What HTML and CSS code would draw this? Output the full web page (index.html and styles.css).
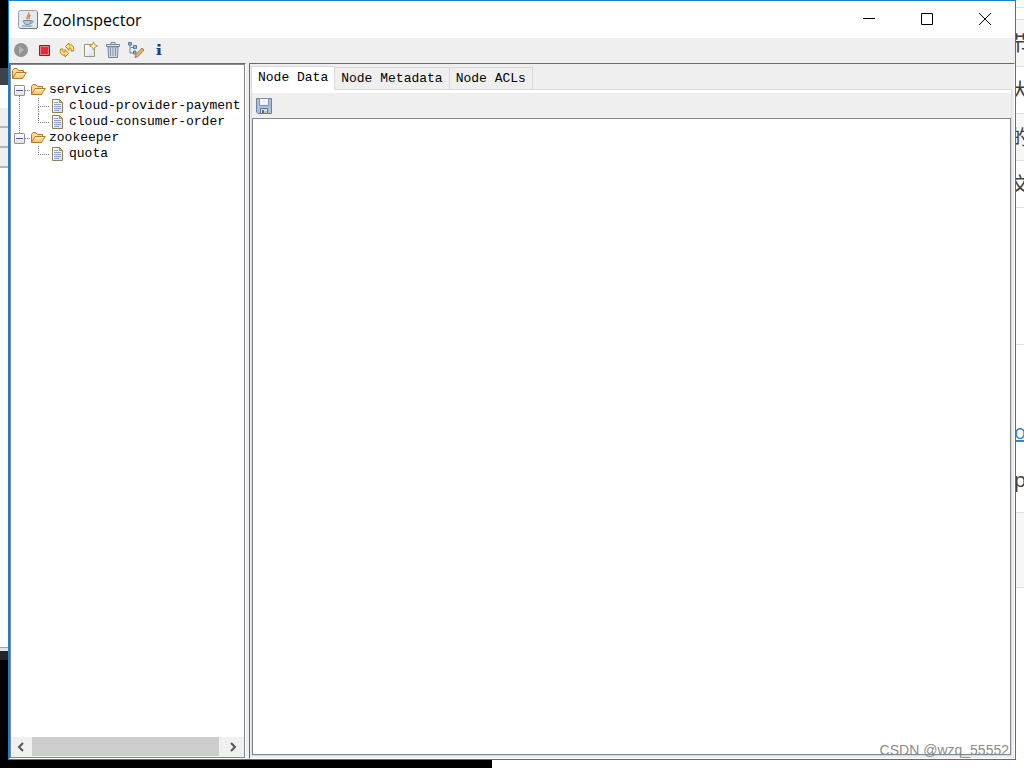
FILE: index.html
```html
<!DOCTYPE html>
<html lang="en">
<head>
<meta charset="utf-8">
<title>ZooInspector</title>
<link rel="stylesheet" href="styles.css">
</head>
<body>
<svg class="symbols" aria-hidden="true">
  <defs>
    <linearGradient id="gold" x1="0" y1="0" x2="0" y2="1"><stop offset="0" stop-color="#fff3c4"/><stop offset="1" stop-color="#f2bd5c"/></linearGradient>
    <linearGradient id="sheet" x1="0" y1="0" x2="1" y2="1"><stop offset="0" stop-color="#ffffff"/><stop offset="1" stop-color="#cfe0f5"/></linearGradient>
    <symbol id="folder" viewBox="0 0 16 16">
      <path d="M1.500 12.500V4.500L3 2.500H6L7.500 4.500H12.500V7" fill="#f7d88c" stroke="#b07a2c"/>
      <path d="M1.500 12.500L5 6.500H15.300L11.500 12.500Z" fill="url(#gold)" stroke="#b87a24"/>
    </symbol>
    <symbol id="file" viewBox="0 0 16 16">
      <path d="M2.500 1.500H9.500L12.500 4.500V14.500H2.500Z" fill="url(#sheet)" stroke="#8f8150"/>
      <path d="M9.500 1.500V4.500H12.500Z" fill="#e6c06c" stroke="#b28a3c"/>
      <path d="M4 4.500H8M4 6.500H11M4 8.500H11M4 10.500H11M4 12.500H9" stroke="#8ba1cc"/>
    </symbol>
  </defs>
</svg>
<div class="desktop">
  <div class="behind-left">
    <div class="dark"></div><div class="slate"></div><div class="pale"></div><div class="band"></div><div class="band"></div><div class="band"></div><div class="blank"></div><div class="edge"></div><div class="dark rest"></div>
  </div>

  <main class="window">
    <header class="titlebar">
      <svg class="app-icon" viewBox="0 0 20 20" aria-hidden="true">
        <rect x=".5" y=".5" width="19" height="18" rx="2" fill="#e4e9ee" stroke="#98a2ab"/>
        <path d="M2 18.500H19M19.500 2V18" stroke="#6f7982"/>
        <path d="M10.500 2.500C12 5 7.500 6 9.500 9.500M12.500 5C10 6.500 11 7.500 11.500 9" fill="none" stroke="#e2864a" stroke-width="1.500"/>
        <path d="M5.500 10.500H13V12C13 14 11.500 14.500 9 14.500S6 13.500 5.500 10.500Z" fill="#b7cadb" stroke="#6d8ba8"/>
        <path d="M13 11C16 10 16 13 12.500 13.500M4 16H14.500" fill="none" stroke="#6d8ba8"/>
      </svg>
      <h1>ZooInspector</h1>
      <div class="controls">
        <button aria-label="Minimize"><svg viewBox="0 0 14 14"><path d="M1 6.500H13"/></svg></button>
        <button aria-label="Maximize"><svg viewBox="0 0 14 14"><path d="M1.500 1.500H12.500V12.500H1.500Z"/></svg></button>
        <button aria-label="Close"><svg viewBox="0 0 14 14"><path d="M1 1L13 13M13 1L1 13"/></svg></button>
      </div>
    </header>

    <div class="toolbar">
      <button aria-label="Connect" disabled><svg viewBox="0 0 16 16"><circle cx="8" cy="8" r="7" fill="#929292"/><path d="M6 3.500L11 8L6 12.500Z" fill="#b4b4b4"/></svg></button>
      <button aria-label="Disconnect"><svg viewBox="0 0 16 16"><path d="M3.500 3.500H13.500V13.500H3.500Z" fill="#e32b3a" stroke="#a5121f"/><path d="M4.500 4.500H12.500V12.500H4.500Z" fill="none" stroke="#ee7d83"/></svg></button>
      <button aria-label="Refresh"><svg viewBox="0 0 16 16"><path d="M6.500 4.500L10 1V3C13.500 2 15.500 5 14.500 9H12C12.500 6.500 12 5.500 10 6V8.500Z" fill="#ffe07a" stroke="#b07c1c" stroke-width=".9"/><path d="M9.500 11.500L6 15V13C2.500 14 .5 11 1.500 7H4C3.500 9.500 4 10.500 6 10V7.500Z" fill="#ffe07a" stroke="#b07c1c" stroke-width=".9"/></svg></button>
      <button aria-label="Add node"><svg viewBox="0 0 16 16"><path d="M2.500 2.500H12.500V14.500H2.500Z" fill="url(#sheet)" stroke="#9b9475"/><path d="M11.500 0L12.800 2.700L15.500 4L12.800 5.300L11.500 8L10.200 5.300L7.500 4L10.200 2.700Z" fill="#fff2a8" stroke="#a98a38" stroke-width=".8"/></svg></button>
      <button aria-label="Delete node"><svg viewBox="0 0 16 16"><path d="M3 5H13L12.500 15.500H3.500Z" fill="#cbd6e2" stroke="#75879b"/><path d="M1.500 2.500H14.500V4.500H1.500ZM6 2.500V.5H10V2.500" fill="#dce5ee" stroke="#75879b"/><path d="M5.500 6V14M8 6V14M10.500 6V14" stroke="#8598ad"/></svg></button>
      <button aria-label="Edit node viewers"><svg viewBox="0 0 16 16"><path d="M2 2V11H7M3 5.500H7" fill="none" stroke="#657f9e"/><path d="M.5 .5H3.500V3H.5ZM5.500 3.500H8.500V6.500H5.500ZM5.500 9H8V12H5.500Z" fill="#9cb6d8" stroke="#3c61a0" stroke-width=".8"/><path d="M8 12.500L14 6L16 8L10 14.500L7 15.500Z" fill="#e8b662" stroke="#8c6840" stroke-width=".8"/></svg></button>
      <button aria-label="About"><svg viewBox="0 0 16 16"><path d="M6.500 2H9.500V4.500H6.500ZM5.500 6H9.500V12H10.500V13H5.500V12H6.500V7H5.500Z" fill="#084a90"/></svg></button>
    </div>

    <div class="split">
      <section class="tree-pane">
        <div class="tree-box">
          <ul class="tree">
            <li><span class="row"><svg class="icon"><use href="#folder"/></svg></span>
              <ul>
                <li class="branch more"><span class="row"><button class="toggle" aria-label="Collapse services"></button><i class="link"></i><svg class="icon"><use href="#folder"/></svg><span>services</span></span>
                  <ul>
                    <li class="leaf more"><span class="row"><svg class="icon"><use href="#file"/></svg><span>cloud-provider-payment</span></span></li>
                    <li class="leaf"><span class="row"><svg class="icon"><use href="#file"/></svg><span>cloud-consumer-order</span></span></li>
                  </ul>
                </li>
                <li class="branch"><span class="row"><button class="toggle" aria-label="Collapse zookeeper"></button><i class="link"></i><svg class="icon"><use href="#folder"/></svg><span>zookeeper</span></span>
                  <ul>
                    <li class="leaf"><span class="row"><svg class="icon"><use href="#file"/></svg><span>quota</span></span></li>
                  </ul>
                </li>
              </ul>
            </li>
          </ul>
          <div class="scrollbar">
            <button aria-label="Scroll left"><svg viewBox="0 0 12 12"><path d="M7 2L3 6L7 10"/></svg></button>
            <div class="thumb"></div>
            <button class="right" aria-label="Scroll right"><svg viewBox="0 0 12 12"><path d="M5 2L9 6L5 10"/></svg></button>
          </div>
        </div>
      </section>

      <section class="detail-pane">
        <div class="tabs" role="tablist">
          <button role="tab" aria-selected="true" class="tab selected">Node Data</button>
          <button role="tab" aria-selected="false" class="tab">Node Metadata</button>
          <button role="tab" aria-selected="false" class="tab">Node ACLs</button>
          <span class="tab-line"></span>
        </div>
        <div class="tab-body">
          <div class="data-tools">
            <button aria-label="Save"><svg viewBox="0 0 16 16"><path d="M.5 .5H15.500V15.500H2L.5 14Z" fill="#a9c0dd" stroke="#6882a1"/><path d="M3.500 .5H12.500V7.500H3.500Z" fill="#f1f5f4" stroke="#7d95ac"/><path d="M4.500 10.500H11.500V15.500H4.500Z" fill="#dbe1e3" stroke="#56799f"/><path d="M6 12H8V15H6Z" fill="#4b71a0"/><path d="M8 13H11V15H8Z" fill="#e0c676"/></svg></button>
          </div>
          <textarea class="editor" aria-label="Node data"></textarea>
        </div>
      </section>
    </div>
  </main>

  <div class="behind-right">
    <div class="cell sliver"></div>
    <div class="cell gap"></div>
    <div class="cell shade"><span>节</span></div>
    <div class="cell"><span>大</span></div>
    <div class="cell shade"><span>的</span></div>
    <div class="cell"><span>文</span></div>
    <div class="cell space"></div>
    <div class="cell prose"><a href="#">o</a><span>p</span></div>
    <div class="cell shade quote"></div>
  </div>
  <div class="behind-bottom"><div class="black"></div></div>
  <div class="watermark">CSDN @wzq_55552</div>
</div>
</body>
</html>
```
FILE: styles.css
```css
* { box-sizing: border-box; }
body { margin: 0; font-family: "Liberation Mono", monospace; font-size: 13px; color: #000; }
button { margin: 0; padding: 0; border: 0; background: none; font: inherit; color: inherit; }
svg { display: block; }
ul { margin: 0; padding: 0; list-style: none; }
.symbols { position: absolute; width: 0; height: 0; }

.desktop {
  position: relative;
  display: grid;
  grid-template-columns: 8px minmax(0, 1fr) 8px;
  grid-template-rows: minmax(0, 1fr) 8px;
  height: 100vh;
  overflow: hidden;
  background: #fff;
}

.behind-left { grid-column: 1; grid-row: 1 / 3; display: flex; flex-direction: column; }
.dark { height: 68px; background: #000; }
.dark.rest { height: 117px; border-top: 9px solid #242526; }
.slate { height: 17px; background: #3d4249; }
.pale { height: 23px; background: #fcfefd; }
.band { height: 20px; background: #eef0ef; border-bottom: 2px solid #b4b6b6; }
.blank { flex: 1; background: #fff; }
.edge { height: 4px; background: #e4e4e4; border-top: 1px solid #a0a0a0; }

.behind-right {
  grid-column: 3; grid-row: 1 / 3;
  overflow: hidden;
  color: #3f3f3f;
  font: 20px/46px "Noto Sans CJK SC", sans-serif;
}
.cell { display: flex; justify-content: center; height: 47px; border-bottom: 1px solid #dfdfdf; }
.cell.shade { background: #f7f7f7; }
.cell.sliver { height: 8px; }
.cell.gap { height: 12px; }
.cell.space { height: 137px; }
.cell.prose { flex-direction: column; align-items: center; height: 168px; padding-top: 54px; line-height: 48px; font-family: "Open Sans", sans-serif; }
.cell.quote { height: 75px; }
.cell a { color: #3b7fc4; text-decoration-thickness: 2px; }

.behind-bottom { grid-column: 2; grid-row: 2; background: #fff; }
.black { width: 48%; height: 8px; background: #000; }

.window {
  grid-column: 2; grid-row: 1;
  display: flex;
  flex-direction: column;
  background: #efefef;
  border: 1px solid #1a80d2;
}
.titlebar { display: flex; align-items: center; height: 37px; padding-left: 9px; background: #fff; }
.app-icon { width: 20px; height: 20px; margin-right: 5px; }
h1 { margin: 0; font: 400 16px/22px "Open Sans", sans-serif; }
.controls { display: flex; align-self: flex-start; margin-left: auto; padding-right: 1px; }
.controls button { display: grid; place-items: center; width: 58px; height: 36px; }
.controls svg { width: 14px; height: 14px; fill: none; stroke: #000; }

.toolbar { display: flex; align-items: center; gap: 7px; height: 25px; padding: 0 4px 2px; }
.toolbar svg, .data-tools svg, .icon { width: 16px; height: 16px; }

.split { flex: 1; display: flex; gap: 3px; min-height: 0; }
.tree-pane { flex: 0 0 237px; border: 1px solid #696969; border-right-color: #fff; border-bottom-color: #fff; }
.tree-box { display: flex; flex-direction: column; height: 100%; background: #fff; border: 1px solid #828790; overflow: hidden; }
.tree { flex: 1; padding-top: 1px; line-height: 16px; white-space: nowrap; }
.row { display: flex; align-items: center; height: 16px; }
.icon { flex: none; margin-right: 3px; }
.branch, .leaf { position: relative; }
.branch { padding-left: 3px; }
.toggle {
  width: 11px; height: 11px;
  border: 1px solid #919191;
  border-radius: 1px;
  background: linear-gradient(#4b63a7, #4b63a7) center / 7px 1px no-repeat, linear-gradient(#fff, #e2e2e2);
}
.link { width: 5px; border-top: 1px dotted #808080; }
.branch.more::before {
  content: ""; position: absolute; left: 8px; top: 14px; bottom: -3px;
  border-left: 1px dotted #808080;
}
.leaf { padding-left: 36px; }
.leaf::before {
  content: ""; position: absolute; left: 24px; top: 0; width: 10px; height: 8px;
  border-left: 1px dotted #808080; border-bottom: 1px dotted #808080;
}
.leaf.more::after {
  content: ""; position: absolute; left: 24px; top: 8px; height: 8px;
  border-left: 1px dotted #808080;
}
.scrollbar { display: flex; height: 20px; background: #f0f0f0; border-bottom: 1px solid #f0f0f0; }
.scrollbar button { display: grid; place-items: center; width: 21px; }
.scrollbar .right { width: 25px; }
.scrollbar svg { width: 12px; height: 12px; fill: none; stroke: #555; stroke-width: 2px; }
.thumb { flex: 1; background: #cdcdcd; }

.detail-pane {
  flex: 1;
  display: flex;
  flex-direction: column;
  min-width: 0;
  padding: 2px 2px 2px 1px;
  border: 1px solid #696969;
  border-right-color: #fff;
  border-bottom-color: #fff;
}
.tabs { display: flex; align-items: flex-end; height: 24px; }
.tab { height: 23px; padding: 0 6px; border: 1px solid #d9d9d9; border-left-width: 0; line-height: 21px; white-space: nowrap; }
.tab.selected { height: 24px; background: #fff; border-left-width: 1px; border-bottom-color: #fff; line-height: 20px; }
.tab-line { flex: 1; border-bottom: 1px solid #d9d9d9; }
.tab-body {
  flex: 1;
  display: flex;
  flex-direction: column;
  padding-top: 3px;
  background: linear-gradient(#fff, #fff) top / 100% 3px no-repeat;
  border: 1px solid #d9d9d9;
  border-top: 0;
}
.data-tools { display: flex; align-items: center; height: 25px; padding-left: 4px; }
.editor { flex: 1; width: 100%; padding: 2px; border: 1px solid #828790; border-radius: 0; resize: none; background: #fff; font: inherit; outline: 0; }

.watermark {
  position: absolute; right: 15px; bottom: 9px;
  color: #8c8c8c;
  font: 14px/17px "Liberation Sans", sans-serif;
}
```
